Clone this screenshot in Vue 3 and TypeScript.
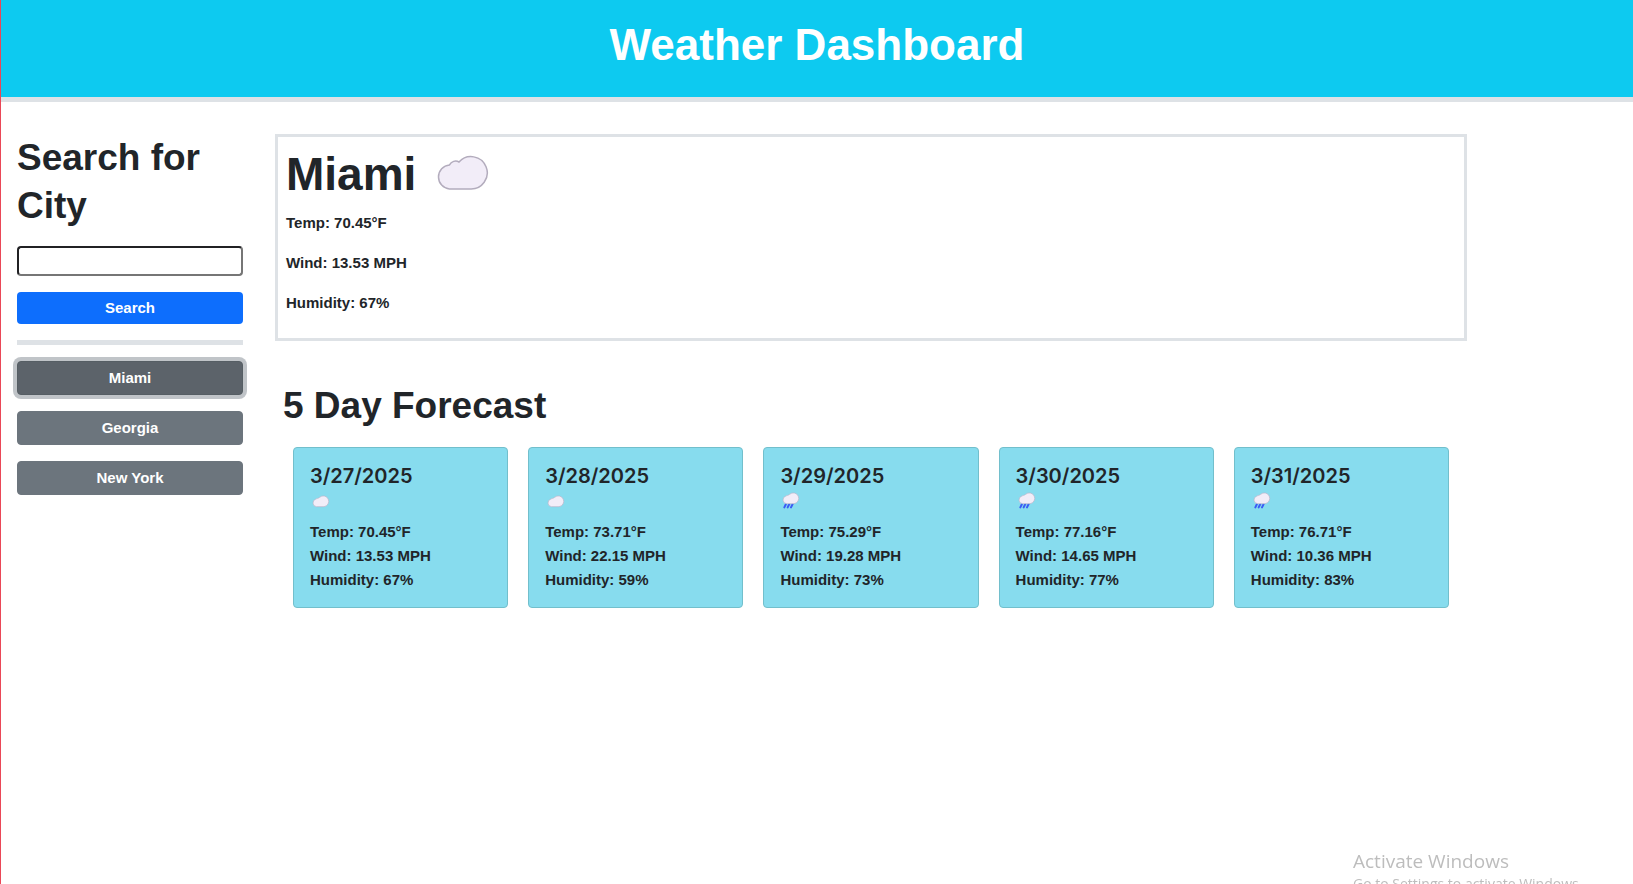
<script setup lang="ts">
import { ref } from 'vue'

interface Day {
  date: string
  icon: 'cloud' | 'rain'
  temp: string
  wind: string
  humidity: number
}

const query = ref('')
const history = ['Miami', 'Georgia', 'New York']
const active = ref('Miami')

const days: Day[] = [
  { date: '3/27/2025', icon: 'cloud', temp: '70.45', wind: '13.53', humidity: 67 },
  { date: '3/28/2025', icon: 'cloud', temp: '73.71', wind: '22.15', humidity: 59 },
  { date: '3/29/2025', icon: 'rain', temp: '75.29', wind: '19.28', humidity: 73 },
  { date: '3/30/2025', icon: 'rain', temp: '77.16', wind: '14.65', humidity: 77 },
  { date: '3/31/2025', icon: 'rain', temp: '76.71', wind: '10.36', humidity: 83 },
]

const cloudPath =
  'M13.5 34A12.1 12.1 0 0 1 13.5 9.9C15.2 6.4 19.6 5 23 7A16.2 16.2 0 1 1 34 34Z'
const smallCloudPath =
  'M13 34A11.6 11.6 0 0 1 11 11.5C15 9 19 9.5 23 6A16.2 16.2 0 1 1 36 34Z'
</script>

<template>
  <div class="page">
    <header class="banner">
      <h1>Weather Dashboard</h1>
    </header>

    <div class="layout">
      <aside class="sidebar">
        <form class="search" @submit.prevent>
          <label class="heading" for="city">Search for City</label>
          <input id="city" v-model="query" type="text" autocomplete="off" />
          <button class="btn primary" type="submit">Search</button>
        </form>
        <hr class="divider" />
        <div class="history">
          <button
            v-for="city in history"
            :key="city"
            type="button"
            class="btn secondary"
            :class="{ active: city === active }"
            @click="active = city"
          >
            {{ city }}
          </button>
        </div>
      </aside>

      <main class="content">
        <section class="current">
          <h2 class="current-title">
            Miami
            <svg class="icon-large" viewBox="0 0 54 38" role="img" aria-label="Cloudy">
              <path :d="cloudPath" fill="#f2edf8" stroke="#b3acbd" stroke-width="1.5" />
            </svg>
          </h2>
          <p>Temp: 70.45°F</p>
          <p>Wind: 13.53 MPH</p>
          <p>Humidity: 67%</p>
        </section>

        <section class="forecast">
          <h2 class="heading">5 Day Forecast</h2>
          <div class="cards">
            <article v-for="day in days" :key="day.date" class="card">
              <h3>{{ day.date }}</h3>
              <svg class="icon-small" viewBox="0 0 54 72" aria-hidden="true">
                <g v-if="day.icon === 'cloud'" transform="translate(0 22)">
                  <path :d="smallCloudPath" fill="#f2edf8" stroke="#b9b4c8" stroke-width="2" />
                </g>
                <template v-else>
                  <path
                    d="M12 48L7 58M22 48L17 58M32 48L27 58"
                    fill="none"
                    stroke="#3b5cf5"
                    stroke-width="6"
                    stroke-linecap="round"
                  />
                  <g transform="translate(0 13)">
                    <path :d="smallCloudPath" fill="#f2edf8" stroke="#b9b4c8" stroke-width="2" />
                  </g>
                </template>
              </svg>
              <p>Temp: {{ day.temp }}°F</p>
              <p>Wind: {{ day.wind }} MPH</p>
              <p>Humidity: {{ day.humidity }}%</p>
            </article>
          </div>
        </section>
      </main>
    </div>

    <div class="watermark">
      <div class="watermark-title">Activate Windows</div>
      <div class="watermark-text">Go to Settings to activate Windows.</div>
    </div>
  </div>
</template>

<style>
body {
  background: #fff;
}
</style>

<style scoped>
.page {
  box-sizing: border-box;
  min-height: 100vh;
  border-left: 1px solid #ea4757;
  font-family: 'Franklin Gothic Medium', 'Liberation Sans', Arial, sans-serif;
  font-size: 15px;
  font-weight: 700;
  line-height: 24px;
  color: #212529;
}

h1,
h2,
h3,
p {
  margin: 0;
}

.banner {
  padding: 16px 16px 23px;
  background: #0dcaf0;
  border-bottom: 5px solid #dee2e6;
  color: #fff;
  text-align: center;
}

.banner h1 {
  font-size: 44px;
  line-height: 58px;
}

.layout {
  display: flex;
  padding-top: 32px;
}

.sidebar {
  box-sizing: border-box;
  flex: 0 0 258px;
  padding: 0 16px;
}

.heading {
  font-size: 37px;
  font-weight: 700;
  line-height: 48px;
}

.search,
.history {
  display: flex;
  flex-direction: column;
  gap: 16px;
}

.search input {
  box-sizing: border-box;
  width: 100%;
  height: 30px;
  padding: 1px 4px;
  border: 2px solid;
  border-color: #212124 #767676 #767676 #212124;
  border-radius: 4px;
  background: #fff;
  font: inherit;
  outline: none;
}

.btn {
  padding: 4px 12px;
  border: 0;
  border-radius: 4px;
  color: #fff;
  font: inherit;
  cursor: pointer;
}

.primary {
  background: #0d6efd;
}

.secondary {
  border: 1px solid #6c757d;
  background: #6c757d;
}

.secondary.active {
  border-color: #565e64;
  background: #5c636a;
  box-shadow: 0 0 0 4px rgba(130, 138, 145, 0.5);
}

.divider {
  height: 5px;
  margin: 16px 0;
  border: 0;
  background: #dee2e6;
}

.content {
  box-sizing: border-box;
  flex: 0 0 75%;
  min-width: 0;
  padding: 0 16px;
}

.current {
  padding: 8px 8px 23px;
  border: 3px solid #dee2e6;
}

.current-title {
  display: flex;
  align-items: center;
  gap: 20px;
  margin-bottom: 8px;
  font-size: 46px;
  line-height: 58px;
}

.current p + p {
  margin-top: 16px;
}

.icon-large {
  width: 54px;
  height: 38px;
}

.forecast {
  margin-top: 41px;
  padding: 0 8px;
}

.cards {
  display: grid;
  grid-template-columns: repeat(5, 1fr);
  gap: 20px;
  margin-top: 17px;
  padding: 0 10px;
}

.card {
  padding: 16px 16px 15px;
  border: 1px solid #72bfcc;
  border-radius: 4px;
  background: #87dcee;
}

.card h3 {
  font-family: Inter, sans-serif;
  font-size: 20px;
  font-weight: 600;
  line-height: 24px;
}

.icon-small {
  display: block;
  width: 18px;
  height: 24px;
  margin: 0 2px 8px;
}

.watermark {
  position: fixed;
  right: 0;
  bottom: 0;
  width: 280px;
  height: 36px;
  overflow: hidden;
  color: #bdbdbd;
  font-family: 'Segoe UI', 'Open Sans', sans-serif;
  font-weight: 400;
  white-space: nowrap;
  pointer-events: none;
}

.watermark-title {
  font-size: 19px;
  line-height: 26px;
}

.watermark-text {
  font-size: 14px;
  line-height: 20px;
}
</style>
